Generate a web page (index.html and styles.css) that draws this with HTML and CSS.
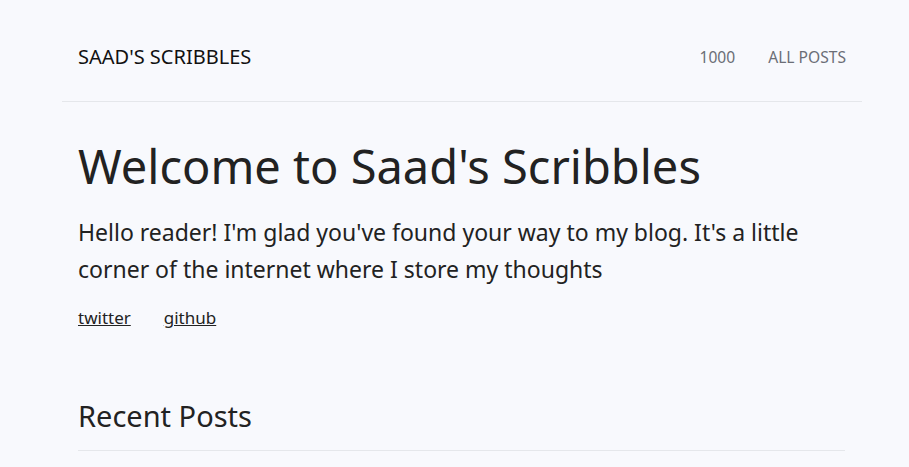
FILE: index.html
```html
<!DOCTYPE html>
<html lang="en">
<head>
<meta charset="utf-8">
<title>Saad's Scribbles</title>
<link rel="stylesheet" href="styles.css">
</head>
<body>
<div class="page">
  <header class="site-header">
    <a class="brand" href="#">SAAD'S SCRIBBLES</a>
    <nav class="nav">
      <a href="#">1000</a>
      <a href="#">ALL POSTS</a>
    </nav>
  </header>
  <main class="content">
    <h1 class="title">Welcome to Saad's Scribbles</h1>
    <p class="intro">Hello reader! I'm glad you've found your way to my blog. It's a little corner of the internet where I store my thoughts</p>
    <div class="links">
      <a href="#">twitter</a>
      <a href="#">github</a>
    </div>
    <h2 class="section-title">Recent Posts</h2>
  </main>
</div>
</body>
</html>
```
FILE: styles.css
```css
html, body {
  margin: 0;
  padding: 0;
  background: #f8f9fd;
}
body {
  font-family: "Noto Sans", "Open Sans", sans-serif;
  color: #222;
}
.page {
  width: 800px;
  margin-left: 62px;
}
.site-header {
  display: flex;
  justify-content: space-between;
  align-items: center;
  height: 102px;
  padding: 12px 16px 0;
  border-bottom: 1px solid #e5e7eb;
  box-sizing: border-box;
}
.brand {
  font-size: 20px;
  color: #111;
  text-decoration: none;
}
.nav {
  display: flex;
  gap: 33px;
}
.nav a {
  font-size: 15.6px;
  color: #6b6e76;
  text-decoration: none;
}
.content {
  padding: 0 16px;
}
.title {
  font-weight: 400;
  font-size: 47px;
  line-height: 1.2;
  margin: 36px 0 20px;
  color: #222;
}
.intro {
  font-size: 23px;
  line-height: 37px;
  margin: 0 0 18px;
  max-width: 760px;
}
.links {
  display: flex;
  gap: 33px;
}
.links a {
  font-size: 17px;
  color: #222;
  text-decoration: underline;
}
.section-title {
  font-weight: 400;
  font-size: 29px;
  margin: 67px 0 0;
  padding-bottom: 15px;
  border-bottom: 1px solid #e5e7eb;
  width: 767px;
}
```
